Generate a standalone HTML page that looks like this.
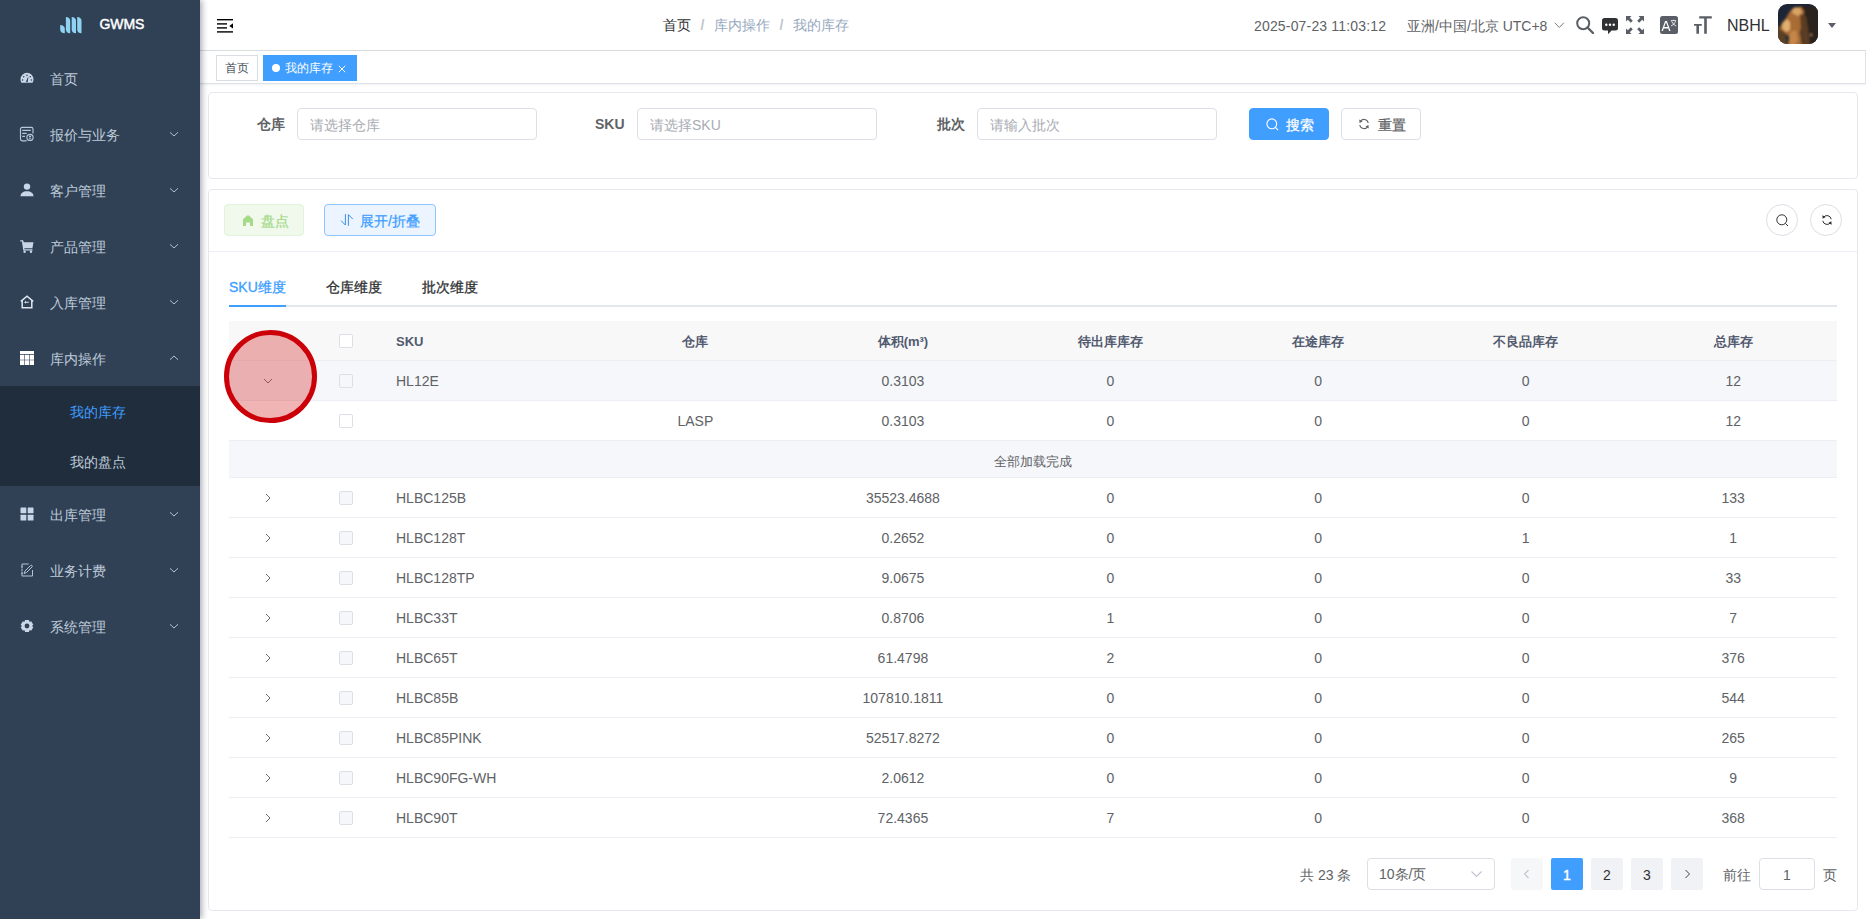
<!DOCTYPE html>
<html><head><meta charset="utf-8">
<style>
*{box-sizing:border-box;margin:0;padding:0}
html,body{width:1866px;height:919px;overflow:hidden;background:#fff;font-family:"Liberation Sans",sans-serif;color:#606266}
.abs{position:absolute}
/* sidebar */
#side{position:absolute;left:0;top:0;width:200px;height:919px;background:#304156;z-index:5;box-shadow:2px 0 6px rgba(0,21,41,.35)}
#side .logo{position:absolute;left:0;top:0;width:200px;height:50px}
#side .logo .t{position:absolute;left:99.5px;top:14px;font-size:14px;font-weight:normal;-webkit-text-stroke:.45px #fff;color:#fff;line-height:20px;letter-spacing:-0.1px}
.mi{position:absolute;left:0;width:200px;height:56px;color:#bfcbd9;font-size:14px}
.mi .tx{position:absolute;left:50px;top:1px;line-height:56px;white-space:nowrap}
.mi svg.ic{position:absolute;left:20px;top:21px;width:14px;height:14px}
.mi svg.ar{position:absolute;left:169px;top:25px;width:10px;height:6px}
#sub{position:absolute;left:0;top:386px;width:200px;height:100px;background:#1f2d3d}
.si{position:absolute;left:70px;font-size:14px;line-height:52px;height:50px;color:#bfcbd9}
/* navbar */
#nav{position:absolute;left:200px;top:0;width:1666px;height:51px;background:#fff;border-bottom:1px solid #d9dcdf;z-index:2}
#tags{position:absolute;left:200px;top:51px;width:1666px;height:33px;background:#fff;border-bottom:1px solid #dfe2e8;border-right:1px solid #dfe2e8;box-shadow:0 1px 2px 0 rgba(0,0,0,.06);z-index:1}
.tag{position:absolute;top:4px;height:26px;line-height:24px;border:1px solid #d8dce5;font-size:12px;color:#495060;background:#fff;padding:0 8px}
.card{position:absolute;left:208px;width:1650px;border:1px solid #e6e8ee;border-radius:4px;background:#fff}
.lbl{position:absolute;font-size:14px;font-weight:bold;color:#606266;line-height:32px;top:108px}
.inp{position:absolute;top:108px;height:32px;width:240px;border:1px solid #dcdfe6;border-radius:4px;font-size:14px;color:#a8abb2;line-height:32px;padding-left:12px;background:#fff}
.btn{position:absolute;height:32px;border-radius:4px;font-size:14px;line-height:30px;text-align:center;white-space:nowrap;-webkit-text-stroke:.25px currentColor}
/* table */
.row{position:absolute;left:229px;width:1608px;height:40px;border-bottom:1px solid #ebeef5;font-size:14px;color:#606266}
.c{position:absolute;top:0;line-height:40px;text-align:center;width:207.57px;white-space:nowrap}
.cb{position:absolute;left:110px;top:13px;width:14px;height:14px;border:1px solid #dcdfe6;border-radius:2px;background:#fff}
.cb.dis{background:#f5f7fa}
.exp{position:absolute;left:35px;top:15px;width:8px;height:10px}
.sku{position:absolute;left:167px;top:0;line-height:40px}
.pg{position:absolute;top:858px;width:32px;height:32px;border-radius:2px;background:#f1f2f5;font-size:14px;line-height:34px;text-align:center;color:#303133}
</style></head><body>

<div id="side">
  <div class="logo">
    <svg class="abs" style="left:60px;top:16px" width="22" height="18" viewBox="0 0 22 18"><g fill="#8fd2f2"><path d="M0.2 9 Q4.8 9.3 4.8 13 L4.8 17.2 Q0.2 17 0.2 13.5 Z"/><path d="M5.9 1 Q10.2 1.3 10.2 5 L10.2 17.2 Q5.9 17 5.9 13.5 Z"/><path d="M11.7 1 Q16 1.3 16 5 L16 17.2 Q11.7 17 11.7 13.5 Z"/><path d="M17.2 1 Q21.5 1.3 21.5 5 L21.5 17.2 Q17.2 17 17.2 13.5 Z"/></g></svg>
    <div class="t">GWMS</div>
  </div>
  <!-- menu items -->
  <div class="mi" style="top:50px"><svg class="ic" viewBox="0 0 14 14"><path fill="#c8d6e8" d="M7 1.8A6.5 6.5 0 0 0 0.5 8.3c0 1.3.3 2.4.9 3.4h11.2c.6-1 .9-2.1.9-3.4A6.5 6.5 0 0 0 7 1.8z"/><g fill="#304156"><circle cx="7" cy="4.3" r=".8"/><circle cx="3.7" cy="5.8" r=".8"/><circle cx="10.3" cy="5.8" r=".8"/><circle cx="2.6" cy="9" r=".8"/><circle cx="11.4" cy="9" r=".8"/><path d="M6 10.5 L8.2 5.5 L8.4 5.6 L7.8 10.8 A1 1 0 0 1 6 10.5z"/></g></svg><span class="tx">首页</span></div>
  <div class="mi" style="top:106px"><svg class="ic" viewBox="0 0 14 14" style="overflow:visible"><g fill="none" stroke="#b8c6d8" stroke-width="1.15"><path d="M13 6.6V2A1.7 1.7 0 0 0 11.3.3H2.2A1.7 1.7 0 0 0 .5 2v10.1a1.7 1.7 0 0 0 1.7 1.7H6.6"/><path d="M2.2 3.4h8.6M2.2 6.4h4.5M2.2 9.3H5"/><circle cx="10" cy="10.4" r="3.1"/></g><circle cx="10" cy="9.6" r="1" fill="#c8d6e8"/><path d="M8.3 12.2a1.8 1.3 0 0 1 3.4 0z" fill="#c8d6e8"/></svg><span class="tx">报价与业务</span><svg class="ar" viewBox="0 0 10 6"><path d="M1 1.3 5 5 9 1.3" fill="none" stroke="#b4c0ce" stroke-width="1"/></svg></div>
  <div class="mi" style="top:162px"><svg class="ic" viewBox="0 0 14 14"><circle cx="7" cy="3.6" r="3.2" fill="#c8d6e8"/><path d="M0.5 13.2c0-3 2.6-5 6.5-5s6.5 2 6.5 5z" fill="#c8d6e8"/></svg><span class="tx">客户管理</span><svg class="ar" viewBox="0 0 10 6"><path d="M1 1.3 5 5 9 1.3" fill="none" stroke="#b4c0ce" stroke-width="1"/></svg></div>
  <div class="mi" style="top:218px"><svg class="ic" viewBox="0 0 14 14"><path fill="#c8d6e8" d="M0.2 1.2h3l.5 2h9.8l-1.1 6H4.3l.2 1h8v1.3H3.3L1.9 2.5H0.2z"/><circle cx="4.6" cy="12.8" r="1.2" fill="#c8d6e8"/><circle cx="11" cy="12.8" r="1.2" fill="#c8d6e8"/></svg><span class="tx">产品管理</span><svg class="ar" viewBox="0 0 10 6"><path d="M1 1.3 5 5 9 1.3" fill="none" stroke="#b4c0ce" stroke-width="1"/></svg></div>
  <div class="mi" style="top:274px"><svg class="ic" viewBox="0 0 14 14"><path fill="none" stroke="#dde6f0" stroke-width="1.5" d="M.8 6.3 7 1.2l6.2 5.1M2.2 5.2v7.5h9.6V5.2"/><path fill="#dde6f0" d="M4.2 7.3 6 5.8v3z"/><path fill="#b0bccb" d="M6 6.7h2.8v1.3H6z"/></svg><span class="tx">入库管理</span><svg class="ar" viewBox="0 0 10 6"><path d="M1 1.3 5 5 9 1.3" fill="none" stroke="#b4c0ce" stroke-width="1"/></svg></div>
  <div class="mi" style="top:330px"><svg class="ic" viewBox="0 0 14 14"><path fill="#fff" d="M0 0h14v3H0z"/><path fill="#fff" d="M0 3.7h4.3v5H0zM4.9 3.7h4.2v5H4.9zM9.7 3.7H14v5H9.7zM0 9.3h4.3V14H0zM4.9 9.3h4.2V14H4.9zM9.7 9.3H14V14H9.7z"/></svg><span class="tx">库内操作</span><svg class="ar" viewBox="0 0 10 6"><path d="M1 4.7 5 1 9 4.7" fill="none" stroke="#b4c0ce" stroke-width="1"/></svg></div>
  <div id="sub">
    <div class="si" style="top:0;color:#409eff">我的库存</div>
    <div class="si" style="top:50px">我的盘点</div>
  </div>
  <div class="mi" style="top:486px"><svg class="ic" viewBox="0 0 14 14"><g fill="#c8d6e8"><rect x="0.5" y="0.5" width="5.8" height="5.8" rx=".6"/><rect x="7.7" y="0.5" width="5.8" height="5.8" rx=".6"/><rect x="0.5" y="7.7" width="5.8" height="5.8" rx=".6"/><rect x="7.7" y="7.7" width="5.8" height="5.8" rx=".6"/></g></svg><span class="tx">出库管理</span><svg class="ar" viewBox="0 0 10 6"><path d="M1 1.3 5 5 9 1.3" fill="none" stroke="#b4c0ce" stroke-width="1"/></svg></div>
  <div class="mi" style="top:542px"><svg class="ic" viewBox="0 0 14 14"><g fill="none" stroke="#b6c3d3" stroke-width="1"><path d="M8.7 1H2v3M2 5.5v3M2 10v3h10.5V7"/><path d="M4 10.5l1-2.5L10.5 2.5a1 1 0 0 1 1.5 1.5L6.5 9.5z"/></g><path d="M1 4h2M1 10h2" stroke="#c8d6e8" stroke-width="1.2"/></svg><span class="tx">业务计费</span><svg class="ar" viewBox="0 0 10 6"><path d="M1 1.3 5 5 9 1.3" fill="none" stroke="#b4c0ce" stroke-width="1"/></svg></div>
  <div class="mi" style="top:598px"><svg class="ic" viewBox="0 0 14 14"><path fill="#c8d6e8" fill-rule="evenodd" d="M5.1 0.9h3.8l.6 1.9 1.9-.4 1.9 3.3-1.3 1.3 1.3 1.3-1.9 3.3-1.9-.4-.6 1.9H5.1l-.6-1.9-1.9.4L.7 8.3 2 7 .7 5.7l1.9-3.3 1.9.4zM7 4.6a2.4 2.4 0 1 0 0 4.8 2.4 2.4 0 0 0 0-4.8z"/></svg><span class="tx">系统管理</span><svg class="ar" viewBox="0 0 10 6"><path d="M1 1.3 5 5 9 1.3" fill="none" stroke="#b4c0ce" stroke-width="1"/></svg></div>
</div>

<div id="nav">
  <svg class="abs" style="left:17px;top:19px" width="16" height="14" viewBox="0 0 16 14"><g fill="#000"><rect x="0" y="0" width="16" height="1.4"/><rect x="0" y="4.2" width="10" height="1.4"/><rect x="0" y="8.2" width="10" height="1.4"/><rect x="0" y="12.2" width="16" height="1.4"/><path d="M16 4.2v5.4L12.3 6.9z"/></g></svg>
  <div class="abs" style="left:463px;top:0;line-height:50px;font-size:14px;white-space:nowrap"><span style="color:#303133">首页</span><span style="color:#c0c4cc;margin:0 9.5px;font-weight:bold">/</span><span style="color:#97a8be">库内操作</span><span style="color:#c0c4cc;margin:0 9.5px;font-weight:bold">/</span><span style="color:#97a8be">我的库存</span></div>
  <div class="abs" style="left:1054px;top:1px;line-height:50px;letter-spacing:.17px;font-size:14px;color:#606266;white-space:nowrap">2025-07-23 11:03:12</div>
  <div class="abs" style="left:1207px;top:1px;line-height:50px;font-size:14px;color:#606266;white-space:nowrap">亚洲/中国/北京 UTC+8</div>
  <svg class="abs" style="left:1353.5px;top:21.8px" width="11" height="7" viewBox="0 0 11 7"><path d="M.7.7 5.3 5.5 9.9.7" fill="none" stroke="#7a7d82" stroke-width="1"/></svg>
  <svg class="abs" style="left:1376px;top:16px" width="18" height="18" viewBox="0 0 18 18"><circle cx="7.2" cy="7.2" r="6" fill="none" stroke="#5a5e66" stroke-width="2"/><path d="M11.5 11.5 17 17" stroke="#5a5e66" stroke-width="2.4" stroke-linecap="round"/></svg>
  <svg class="abs" style="left:1402px;top:18px" width="16" height="16" viewBox="0 0 16 16"><path fill="#303133" d="M2.5 0h11A2.5 2.5 0 0 1 16 2.5v7.6a2.5 2.5 0 0 1-2.5 2.5H9.6L6 16.2v-3.6H2.5A2.5 2.5 0 0 1 0 10.1V2.5A2.5 2.5 0 0 1 2.5 0z"/><g fill="#fff"><circle cx="4.3" cy="6.7" r="1.2"/><circle cx="8" cy="6.7" r="1.2"/><circle cx="11.7" cy="6.7" r="1.2"/></g></svg>
  <svg class="abs" style="left:1426px;top:16px" width="18" height="18" viewBox="0 0 18 18"><g fill="#5a5e66"><path d="M0 0h5.5L3.8 1.7l3 3-2 2-3-3L0 5.5z"/><path d="M18 0h-5.5l1.7 1.7-3 3 2 2 3-3L18 5.5z"/><path d="M0 18h5.5l-1.7-1.7 3-3-2-2-3 3L0 12.5z"/><path d="M18 18h-5.5l1.7-1.7-3-3 2-2 3 3 1.8-1.8z"/></g></svg>
  <svg class="abs" style="left:1460px;top:16px" width="18" height="18" viewBox="0 0 18 18"><rect width="18" height="18" rx="2.5" fill="#5a5e66"/><path d="M1.5 14.9 5.1 5h1.8l3.6 9.9H9.1l-.8-2.4H3.7l-.8 2.4zM4.2 11.1h3.6L6 6.3z" fill="#fff"/><g stroke="#fff" stroke-width=".8" fill="none"><path d="M10.8 4.6h5.4M13.5 3.8v.8M11.6 5.3q1.6 3.6 4.6 4.7M15.6 5.3q-1.4 3.6-4.6 4.7"/></g></svg>
  <svg class="abs" style="left:1494px;top:16px" width="18" height="18" viewBox="0 0 18 18"><g fill="#5a5e66"><path d="M5.2 0.2h12.6v2.3h-5V17.8h-2.6V2.5h-5z"/><path d="M0 8.1h7.8v1.7H5v8H2.4v-8H0z"/></g></svg>
  <div class="abs" style="left:1527px;top:1px;line-height:50px;font-size:16px;color:#303133;white-space:nowrap">NBHL</div>
  <svg class="abs" style="left:1578px;top:4px" width="40" height="40" viewBox="0 0 40 40"><defs><clipPath id="av"><rect width="40" height="40" rx="9"/></clipPath><filter id="bl" x="-20%" y="-20%" width="140%" height="140%"><feGaussianBlur stdDeviation="0.9"/></filter></defs><g clip-path="url(#av)"><rect width="40" height="40" fill="#1c2535"/><g filter="url(#bl)"><path d="M-2 22 6 24 10 42 -2 42z" fill="#5a3f25"/><path d="M22 2 42 3 42 42 24 42 22 20z" fill="#2c231c"/><path d="M3 20 8 14 12 7 17 3 23 3 26 7 25 16 22 28 24 42 10 42 11 33 6 28 2 25z" fill="#a86c34"/><path d="M5 19 9 15 12 18 12 26 8 28 4 24z" fill="#e0b070"/><path d="M15 4 22 4 24 9 20 12 14 9z" fill="#d9a565"/><path d="M22 10 28 12 30 24 32 42 25 42 23 28z" fill="#5a3c22"/><path d="M12 28 18 26 20 36 16 42 11 42z" fill="#c4864a"/><circle cx="33" cy="31" r="1.4" fill="#8a6a48"/></g></g></svg>
  <svg class="abs" style="left:1628px;top:23px" width="8" height="5" viewBox="0 0 8 5"><path d="M0 0h8L4 5z" fill="#5a5e66"/></svg>
</div>
<div id="tags">
  <div class="tag" style="left:16px;width:42px;padding:0;text-align:center">首页</div>
  <div class="tag" style="left:63px;width:94px;background:#409eff;border-color:#409eff;color:#fff;padding:0"><span class="abs" style="left:8px;top:8px;width:8px;height:8px;border-radius:50%;background:#fff"></span><span class="abs" style="left:21.4px;top:0">我的库存</span><svg class="abs" style="left:74.4px;top:9px" width="8" height="8" viewBox="0 0 8 8"><path d="M.8.8 7.2 7.2M7.2.8.8 7.2" stroke="#fff" stroke-width="1"/></svg></div>
</div>

<div class="card" style="top:92px;height:87px"></div>
<div class="lbl" style="left:257px">仓库</div>
<div class="inp" style="left:297px">请选择仓库</div>
<div class="lbl" style="left:595px">SKU</div>
<div class="inp" style="left:637px">请选择SKU</div>
<div class="lbl" style="left:937px">批次</div>
<div class="inp" style="left:977px">请输入批次</div>
<div class="btn" style="left:1249px;top:108px;width:80px;background:#409eff;border:1px solid #409eff;color:#fff"><svg class="abs" style="left:16px;top:9px" width="13" height="13" viewBox="0 0 13 13"><circle cx="5.8" cy="5.8" r="4.9" fill="none" stroke="#fff" stroke-width="1.1"/><path d="M9.3 9.3 12 12" stroke="#fff" stroke-width="1.1"/></svg><span class="abs" style="left:36px;top:1px">搜索</span></div>
<div class="btn" style="left:1341px;top:108px;width:80px;background:#fff;border:1px solid #dcdfe6;color:#606266"><svg class="abs" style="left:16px;top:9px" width="12" height="12" viewBox="0 0 12 12"><g fill="none" stroke="#606266" stroke-width="1.1"><path d="M10.2 5A4.3 4.3 0 0 0 2.2 3.6"/><path d="M1.8 7A4.3 4.3 0 0 0 9.8 8.4"/></g><path d="M1.2 1.6 1.6 5 4.6 3.4z" fill="#606266"/><path d="M10.8 10.4 10.4 7 7.4 8.6z" fill="#606266"/></svg><span class="abs" style="left:36px;top:1px">重置</span></div>
<div class="card" style="top:189px;height:722px"></div>
<div class="abs" style="left:209px;top:251px;width:1648px;height:1px;background:#ebeef5"></div>
<div class="btn" style="left:224px;top:204px;width:80px;background:#f0f9eb;border:1px solid #e1f3d8;color:#a4da89"><svg class="abs" style="left:16px;top:8px" width="14" height="14" viewBox="0 0 14 14"><path d="M7 2.2Q7.4 2.2 7.8 2.6L12 6.2V13H9V9.6H5V13H2V6.2L6.2 2.6Q6.6 2.2 7 2.2z" fill="#a4da89"/></svg><span class="abs" style="left:36px;top:1px">盘点</span></div>
<div class="btn" style="left:324px;top:204px;width:112px;background:#ecf5ff;border:1px solid #8cc5ff;color:#409eff"><svg class="abs" style="left:10px;top:3px" width="20" height="22" viewBox="0 0 20 22"><g fill="none" stroke="#3a8ee6" stroke-width="1"><path d="M10.4 6.1V17L6.1 12.6"/><path d="M13.4 17.8V6.6l4.4 4.5"/></g></svg><span class="abs" style="left:35px;top:1px">展开/折叠</span></div>
<div class="abs" style="left:1766px;top:204px;width:32px;height:32px;border:1px solid #dcdfe6;border-radius:50%"><svg class="abs" style="left:9px;top:9px" width="13" height="13" viewBox="0 0 13 13"><circle cx="5.8" cy="5.8" r="5" fill="none" stroke="#303133" stroke-width="1"/><path d="M9.4 9.4 12 12" stroke="#303133" stroke-width="1"/></svg></div>
<div class="abs" style="left:1810px;top:204px;width:32px;height:32px;border:1px solid #dcdfe6;border-radius:50%"><svg class="abs" style="left:10px;top:9px" width="12" height="12" viewBox="0 0 12 12"><g fill="none" stroke="#303133" stroke-width="1"><path d="M10.2 5.2A4.3 4.3 0 0 0 2.5 3.3"/><path d="M1.8 6.8A4.3 4.3 0 0 0 9.5 8.7"/></g><path d="M1.3 1.2 1.7 4.8 4.8 3z" fill="#303133"/><path d="M10.7 10.8 10.3 7.2 7.2 9z" fill="#303133"/></svg></div>
<!-- tabs -->
<div class="abs" style="left:229px;top:305px;width:1608px;height:2px;background:#e4e7ed"></div>
<div class="abs" style="left:229px;top:305px;width:57px;height:2px;background:#409eff"></div>
<div class="abs" style="left:229px;top:267px;line-height:40px;font-size:14px;color:#409eff;-webkit-text-stroke:.3px #409eff">SKU维度</div>
<div class="abs" style="left:326px;top:267px;line-height:40px;font-size:14px;color:#303133;-webkit-text-stroke:.3px #303133">仓库维度</div>
<div class="abs" style="left:422px;top:267px;line-height:40px;font-size:14px;color:#303133;-webkit-text-stroke:.3px #303133">批次维度</div>
<!-- table -->
<div class="row" style="top:321px;height:40px;background:#f8f8f9;font-weight:bold;color:#515a6e;font-size:13px">
  <div class="cb" style="top:13px"></div>
  <div class="sku" style="line-height:41px">SKU</div>
  <div class="c" style="left:362.57px;line-height:41px">仓库</div><div class="c" style="left:570.14px;line-height:41px">体积(m³)</div><div class="c" style="left:777.71px;line-height:41px">待出库库存</div><div class="c" style="left:985.28px;line-height:41px">在途库存</div><div class="c" style="left:1192.85px;line-height:41px">不良品库存</div><div class="c" style="left:1400.42px;line-height:41px">总库存</div>
</div>
<div class="row" style="top:361px;background:#f5f7fa">
  <svg class="exp" style="left:34px;top:16px;width:10px;height:8px" viewBox="0 0 10 8"><path d="M1 2 5 6 9 2" fill="none" stroke="#707278" stroke-width="1"/></svg>
  <div class="cb dis"></div><div class="sku">HL12E</div>
  <div class="c" style="left:362.57px"></div><div class="c" style="left:570.14px">0.3103</div><div class="c" style="left:777.71px">0</div><div class="c" style="left:985.28px">0</div><div class="c" style="left:1192.85px">0</div><div class="c" style="left:1400.42px">12</div>
</div>
<div class="row" style="top:401px">
  <div class="cb"></div>
  <div class="c" style="left:362.57px">LASP</div><div class="c" style="left:570.14px">0.3103</div><div class="c" style="left:777.71px">0</div><div class="c" style="left:985.28px">0</div><div class="c" style="left:1192.85px">0</div><div class="c" style="left:1400.42px">12</div>
</div>
<div class="row" style="top:441px;height:37px;background:#f5f7fa;font-size:13px"><div class="abs" style="left:0;width:1608px;text-align:center;line-height:41px">全部加载完成</div></div>
<div class="row" style="top:478px"><svg class="exp" viewBox="0 0 8 10"><path d="M2 1 6 5 2 9" fill="none" stroke="#6a6c70" stroke-width="1"/></svg><div class="cb dis"></div><div class="sku">HLBC125B</div><div class="c" style="left:362.57px"></div><div class="c" style="left:570.14px">35523.4688</div><div class="c" style="left:777.71px">0</div><div class="c" style="left:985.28px">0</div><div class="c" style="left:1192.85px">0</div><div class="c" style="left:1400.42px">133</div></div>
<div class="row" style="top:518px"><svg class="exp" viewBox="0 0 8 10"><path d="M2 1 6 5 2 9" fill="none" stroke="#6a6c70" stroke-width="1"/></svg><div class="cb dis"></div><div class="sku">HLBC128T</div><div class="c" style="left:362.57px"></div><div class="c" style="left:570.14px">0.2652</div><div class="c" style="left:777.71px">0</div><div class="c" style="left:985.28px">0</div><div class="c" style="left:1192.85px">1</div><div class="c" style="left:1400.42px">1</div></div>
<div class="row" style="top:558px"><svg class="exp" viewBox="0 0 8 10"><path d="M2 1 6 5 2 9" fill="none" stroke="#6a6c70" stroke-width="1"/></svg><div class="cb dis"></div><div class="sku">HLBC128TP</div><div class="c" style="left:362.57px"></div><div class="c" style="left:570.14px">9.0675</div><div class="c" style="left:777.71px">0</div><div class="c" style="left:985.28px">0</div><div class="c" style="left:1192.85px">0</div><div class="c" style="left:1400.42px">33</div></div>
<div class="row" style="top:598px"><svg class="exp" viewBox="0 0 8 10"><path d="M2 1 6 5 2 9" fill="none" stroke="#6a6c70" stroke-width="1"/></svg><div class="cb dis"></div><div class="sku">HLBC33T</div><div class="c" style="left:362.57px"></div><div class="c" style="left:570.14px">0.8706</div><div class="c" style="left:777.71px">1</div><div class="c" style="left:985.28px">0</div><div class="c" style="left:1192.85px">0</div><div class="c" style="left:1400.42px">7</div></div>
<div class="row" style="top:638px"><svg class="exp" viewBox="0 0 8 10"><path d="M2 1 6 5 2 9" fill="none" stroke="#6a6c70" stroke-width="1"/></svg><div class="cb dis"></div><div class="sku">HLBC65T</div><div class="c" style="left:362.57px"></div><div class="c" style="left:570.14px">61.4798</div><div class="c" style="left:777.71px">2</div><div class="c" style="left:985.28px">0</div><div class="c" style="left:1192.85px">0</div><div class="c" style="left:1400.42px">376</div></div>
<div class="row" style="top:678px"><svg class="exp" viewBox="0 0 8 10"><path d="M2 1 6 5 2 9" fill="none" stroke="#6a6c70" stroke-width="1"/></svg><div class="cb dis"></div><div class="sku">HLBC85B</div><div class="c" style="left:362.57px"></div><div class="c" style="left:570.14px">107810.1811</div><div class="c" style="left:777.71px">0</div><div class="c" style="left:985.28px">0</div><div class="c" style="left:1192.85px">0</div><div class="c" style="left:1400.42px">544</div></div>
<div class="row" style="top:718px"><svg class="exp" viewBox="0 0 8 10"><path d="M2 1 6 5 2 9" fill="none" stroke="#6a6c70" stroke-width="1"/></svg><div class="cb dis"></div><div class="sku">HLBC85PINK</div><div class="c" style="left:362.57px"></div><div class="c" style="left:570.14px">52517.8272</div><div class="c" style="left:777.71px">0</div><div class="c" style="left:985.28px">0</div><div class="c" style="left:1192.85px">0</div><div class="c" style="left:1400.42px">265</div></div>
<div class="row" style="top:758px"><svg class="exp" viewBox="0 0 8 10"><path d="M2 1 6 5 2 9" fill="none" stroke="#6a6c70" stroke-width="1"/></svg><div class="cb dis"></div><div class="sku">HLBC90FG-WH</div><div class="c" style="left:362.57px"></div><div class="c" style="left:570.14px">2.0612</div><div class="c" style="left:777.71px">0</div><div class="c" style="left:985.28px">0</div><div class="c" style="left:1192.85px">0</div><div class="c" style="left:1400.42px">9</div></div>
<div class="row" style="top:798px"><svg class="exp" viewBox="0 0 8 10"><path d="M2 1 6 5 2 9" fill="none" stroke="#6a6c70" stroke-width="1"/></svg><div class="cb dis"></div><div class="sku">HLBC90T</div><div class="c" style="left:362.57px"></div><div class="c" style="left:570.14px">72.4365</div><div class="c" style="left:777.71px">7</div><div class="c" style="left:985.28px">0</div><div class="c" style="left:1192.85px">0</div><div class="c" style="left:1400.42px">368</div></div>
<!-- pagination -->
<div class="abs" style="left:1300px;top:859px;line-height:32px;font-size:14px;color:#606266;white-space:nowrap">共 23 条</div>
<div class="abs" style="left:1367px;top:858px;width:128px;height:32px;border:1px solid #dcdfe6;border-radius:4px;font-size:14px;line-height:31px;padding-left:11px;color:#606266">10条/页<svg class="abs" style="left:103px;top:12px" width="11" height="7" viewBox="0 0 11 7"><path d="M.5.5 5.5 5.5 10.5.5" fill="none" stroke="#c0c4cc" stroke-width="1.1"/></svg></div>
<div class="pg" style="left:1511px;background:#f6f7f9"><svg class="abs" style="left:12px;top:11px" width="7" height="10" viewBox="0 0 7 10"><path d="M5.5 1 1.5 5 5.5 9" fill="none" stroke="#c0c4cc" stroke-width="1.1"/></svg></div>
<div class="pg" style="left:1551px;background:#409eff;color:#fff;-webkit-text-stroke:.4px #fff">1</div>
<div class="pg" style="left:1591px">2</div>
<div class="pg" style="left:1631px">3</div>
<div class="pg" style="left:1671px"><svg class="abs" style="left:13px;top:11px" width="7" height="10" viewBox="0 0 7 10"><path d="M1.5 1 5.5 5 1.5 9" fill="none" stroke="#404246" stroke-width="1"/></svg></div>
<div class="abs" style="left:1723px;top:859px;line-height:32px;font-size:14px;color:#606266">前往</div>
<div class="abs" style="left:1759px;top:858px;width:56px;height:32px;border:1px solid #dcdfe6;border-radius:4px;font-size:14px;line-height:32px;text-align:center;color:#606266">1</div>
<div class="abs" style="left:1823px;top:859px;line-height:32px;font-size:14px;color:#606266">页</div>
<!-- red circle -->
<div class="abs" style="left:224px;top:330px;width:93px;height:93px;border-radius:50%;border:5px solid #cc0008;background:rgba(215,35,35,.34)"></div>

</body></html>
